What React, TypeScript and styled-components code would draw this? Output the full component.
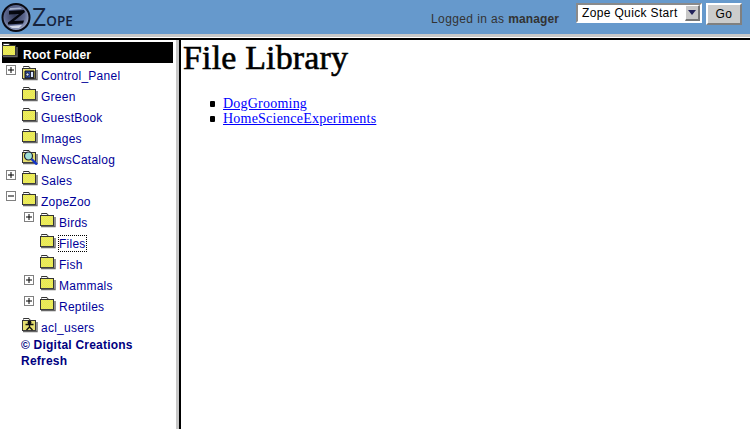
import React from 'react';
import styled, { createGlobalStyle } from 'styled-components';

const GlobalStyle = createGlobalStyle`
  html, body {
    margin: 0;
    padding: 0;
    height: 100%;
    background: #fff;
    overflow: hidden;
  }
  #root { height: 100%; }
`;

const Page = styled.div`
  width: 750px;
  height: 429px;
  display: flex;
  flex-direction: column;
  font-family: "Liberation Sans", Arial, sans-serif;
`;

const Banner = styled.header`
  height: 34px;
  flex: none;
  background: #6699cc;
  display: flex;
  align-items: flex-start;
  border-bottom: 3px solid #c8c8c8;
  box-shadow: 0 1px 0 #fff;
`;

const Logo = styled.div`
  display: flex;
  align-items: center;
  width: 431px;
  height: 34px;
  box-sizing: border-box;
`;

const LogoWord = styled.span`
  font-family: "Open Sans", sans-serif;
  font-size: 13.5px;
  font-weight: 600;
  color: #16233c;
  margin-left: 1px;
  margin-top: -3px;
  letter-spacing: 0;
`;

const LogoCap = styled.span`
  font-size: 25px;
  font-weight: 400;
`;

const Login = styled.div`
  width: 145px;
  padding-top: 12px;
  font-size: 12px;
  letter-spacing: 0.4px;
  color: #333333;
  line-height: 14px;
  white-space: nowrap;
`;

const Manager = styled.b`
  letter-spacing: 0.1px;
`;

const JumpSelect = styled.div`
  margin-top: 3px;
  width: 126px;
  height: 20px;
  box-sizing: border-box;
  border: 2px solid;
  border-color: #8a8a8a #fff #fff #8a8a8a;
  background: #fff;
  display: flex;
  align-items: center;
  justify-content: space-between;
  padding: 0 0 0 4px;
  font-size: 12px;
  letter-spacing: 0.35px;
  color: #000;
  white-space: nowrap;
`;

const SelectArrow = styled.span`
  width: 15px;
  height: 16px;
  box-sizing: border-box;
  background: #c8c8c8;
  border: 1px solid;
  border-color: #fff #777 #777 #fff;
  border-right-width: 2px;
  border-bottom-width: 2px;
  display: flex;
  align-items: center;
  justify-content: center;

  &::after {
    content: '';
    border-left: 4px solid transparent;
    border-right: 4px solid transparent;
    border-top: 5px solid #22225a;
  }
`;

const GoButton = styled.button`
  margin: 3px 0 0 4px;
  width: 36px;
  height: 22px;
  padding: 0;
  box-sizing: border-box;
  border: 2px solid;
  border-color: #fff #808080 #808080 #fff;
  background: #cccccc;
  font-family: inherit;
  font-size: 12px;
  letter-spacing: 0.5px;
  color: #000;
`;

const Frames = styled.div`
  flex: 1;
  display: flex;
  min-height: 0;
  margin-top: 1px;
  border-top: 2px solid #000;
`;

const TreePane = styled.nav`
  width: 176px;
  flex: none;
  box-sizing: border-box;
  padding: 2px 0 0 2px;
  font-size: 12px;
  letter-spacing: 0.25px;
  color: #000099;
`;

const Divider = styled.div`
  width: 5px;
  flex: none;
  background: linear-gradient(to right, #c8c8c8 0 3px, #000 3px 5px);
`;

const Content = styled.main`
  flex: 1;
  padding: 0 0 0 2px;
  color: #000;
  font-family: "Liberation Serif", "Times New Roman", serif;
`;

const RootRow = styled.div`
  width: 171px;
  height: 21px;
  margin-bottom: 2px;
  background: #000;
  color: #fff;
  display: flex;
  align-items: center;
  font-weight: bold;
  font-size: 12px;
  letter-spacing: 0.05px;
`;

const RootLabel = styled.span`
  margin-left: 5px;
  padding-top: 5px;
`;

const Row = styled.div<{ $depth: number }>`
  height: 21px;
  display: flex;
  align-items: center;
  padding-left: ${(p) => 4 + p.$depth * 18}px;
`;

const Toggle = styled.span`
  width: 16px;
  height: 16px;
  flex: none;
  margin-top: -6px;
  display: flex;
  align-items: flex-start;
  justify-content: flex-start;
`;

const Label = styled.a<{ $focused?: boolean }>`
  margin-left: 3px;
  padding-top: 2px;
  line-height: 13px;
  color: #000099;
  white-space: nowrap;
  outline: ${(p) => (p.$focused ? '1px dotted #000' : 'none')};
`;

const FootLink = styled.a`
  display: block;
  padding-left: 19px;
  margin-top: -1px;
  font-weight: bold;
  line-height: 16px;
  letter-spacing: 0.22px;
  color: #000080;

  & + & { margin-top: 0; }
`;

const Heading = styled.h1`
  margin: 0;
  font-size: 34px;
  font-weight: normal;
  line-height: 36px;
  letter-spacing: 0.15px;
  -webkit-text-stroke: 0.6px #000;
`;

const FileList = styled.ul`
  list-style: none;
  margin: 20px 0 0;
  padding: 0 0 0 40px;
  font-size: 14px;
  line-height: 15px;
  letter-spacing: 0.22px;

  a { color: #0000ff; text-decoration: underline; }
`;

const FileItem = styled.li`
  position: relative;

  &::before {
    content: '';
    position: absolute;
    left: -13px;
    top: 5px;
    width: 5px;
    height: 6px;
    border-radius: 1px;
    background: #000;
  }
`;

const LogoMark = () => (
  <svg width="31" height="32" viewBox="0 0 31 32" style={{ flex: 'none' }}>
    <defs>
      <radialGradient id="orb" cx="0.45" cy="0.42" r="0.62">
        <stop offset="0" stopColor="#343b58" />
        <stop offset="0.6" stopColor="#5d6890" />
        <stop offset="0.88" stopColor="#98a3c2" />
        <stop offset="1" stopColor="#3f4766" />
      </radialGradient>
    </defs>
    <circle cx="16" cy="16.5" r="13.5" fill="url(#orb)" stroke="#0a0c16" strokeWidth="2" />
    <path d="M10 7 L20 6.5 L22 8 L9 9 Z" fill="#a6b1cd" />
    <path d="M9 10 L24 9 L25 11 L14 20 L24 19.5 L23 22.5 L8 23.5 L8 21.5 L19 13 L9 13.5 Z" fill="#05070f" />
    <path d="M9 25 L22 24 L19 27 L12 27 Z" fill="#d3d9e8" />
  </svg>
);

const FolderShape = ({ fill }: { fill: string }) => (
  <>
    <path d="M1.5 4 V1.5 H7 L8.5 3.5" fill="#e8e8d8" stroke="#333" />
    <rect x="0.5" y="3.5" width="13" height="10" fill={fill} stroke="#333" />
    <path d="M1.5 2.5 H6" stroke="#fff" />
    <path d="M1 14.5 H15 V5" fill="none" stroke="#666" strokeWidth="1.4" />
  </>
);

const FolderIcon = ({ id }: { id: string }) => (
  <svg width="16" height="16" viewBox="0 0 16 16" style={{ flex: 'none', marginTop: -6 }}>
    <defs>
      <pattern id={id} width="2" height="2" patternUnits="userSpaceOnUse">
        <rect width="2" height="2" fill="#f2f23c" />
        <rect width="1" height="1" fill="#e2e274" />
        <rect x="1" y="1" width="1" height="1" fill="#e2e274" />
      </pattern>
    </defs>
    <FolderShape fill={`url(#${id})`} />
  </svg>
);

const SpecialIcon = ({ kind }: { kind: 'panel' | 'search' | 'user' }) => (
  <svg width="16" height="16" viewBox="0 0 16 16" style={{ flex: 'none', marginTop: -6 }}>
    <FolderShape fill="#e6e070" />
    {kind === 'panel' && (
      <g>
        <path d="M3 6 H12 V13 H3 Z" fill="#2f4fb0" stroke="#111" />
        <circle cx="5.5" cy="9.5" r="1.6" fill="#d8e6ff" stroke="#111" strokeWidth="0.8" />
        <rect x="8.5" y="6.5" width="3" height="6" fill="#d8e6ff" stroke="#111" strokeWidth="0.8" />
      </g>
    )}
    {kind === 'search' && (
      <g>
        <circle cx="6.5" cy="7" r="4" fill="#9fe0d8" stroke="#223" strokeWidth="1.2" />
        <path d="M9.5 10 L15 15.5" stroke="#1133cc" strokeWidth="2.4" />
      </g>
    )}
    {kind === 'user' && (
      <g stroke="#111" strokeWidth="1.4" fill="none">
        <circle cx="7.5" cy="5.5" r="1.3" fill="#111" />
        <path d="M3.5 7.5 H11.5 M7.5 7 V10 M7.5 10 L4.5 13 M7.5 10 L10.5 13" />
      </g>
    )}
  </svg>
);

const TreeToggle = ({ open }: { open: boolean }) => (
  <Toggle>
    <svg width="11" height="11" viewBox="0 0 11 11">
      <rect x="0.5" y="0.5" width="9" height="9" fill="#fff" stroke="#808080" />
      <path d={open ? 'M2 5 H8' : 'M2 5 H8 M5 2 V8'} stroke="#000" fill="none" />
    </svg>
  </Toggle>
);

type Node = {
  name: string;
  depth: number;
  toggle?: 'plus' | 'minus';
  icon: 'folder' | 'panel' | 'search' | 'user';
  focused?: boolean;
};

const nodes: Node[] = [
  { name: 'Control_Panel', depth: 0, toggle: 'plus', icon: 'panel' },
  { name: 'Green', depth: 0, icon: 'folder' },
  { name: 'GuestBook', depth: 0, icon: 'folder' },
  { name: 'Images', depth: 0, icon: 'folder' },
  { name: 'NewsCatalog', depth: 0, icon: 'search' },
  { name: 'Sales', depth: 0, toggle: 'plus', icon: 'folder' },
  { name: 'ZopeZoo', depth: 0, toggle: 'minus', icon: 'folder' },
  { name: 'Birds', depth: 1, toggle: 'plus', icon: 'folder' },
  { name: 'Files', depth: 1, icon: 'folder', focused: true },
  { name: 'Fish', depth: 1, icon: 'folder' },
  { name: 'Mammals', depth: 1, toggle: 'plus', icon: 'folder' },
  { name: 'Reptiles', depth: 1, toggle: 'plus', icon: 'folder' },
  { name: 'acl_users', depth: 0, icon: 'user' },
];

export default function App() {
  return (
    <Page>
      <GlobalStyle />
      <Banner>
        <Logo>
          <LogoMark />
          <LogoWord>
            <LogoCap>Z</LogoCap>OPE
          </LogoWord>
        </Logo>
        <Login>
          Logged in as <Manager>manager</Manager>
        </Login>
        <JumpSelect>
          Zope Quick Start
          <SelectArrow />
        </JumpSelect>
        <GoButton>Go</GoButton>
      </Banner>
      <Frames>
        <TreePane>
          <RootRow>
            <FolderIcon id="root-fill" />
            <RootLabel>Root Folder</RootLabel>
          </RootRow>
          {nodes.map((n) => (
            <Row key={n.name} $depth={n.depth}>
              {n.toggle ? <TreeToggle open={n.toggle === 'minus'} /> : <Toggle />}
              {n.icon === 'folder' ? <FolderIcon id={`fill-${n.name}`} /> : <SpecialIcon kind={n.icon} />}
              <Label $focused={n.focused}>{n.name}</Label>
            </Row>
          ))}
          <FootLink>© Digital Creations</FootLink>
          <FootLink>Refresh</FootLink>
        </TreePane>
        <Divider />
        <Content>
          <Heading>File Library</Heading>
          <FileList>
            <FileItem><a>DogGrooming</a></FileItem>
            <FileItem><a>HomeScienceExperiments</a></FileItem>
          </FileList>
        </Content>
      </Frames>
    </Page>
  );
}
